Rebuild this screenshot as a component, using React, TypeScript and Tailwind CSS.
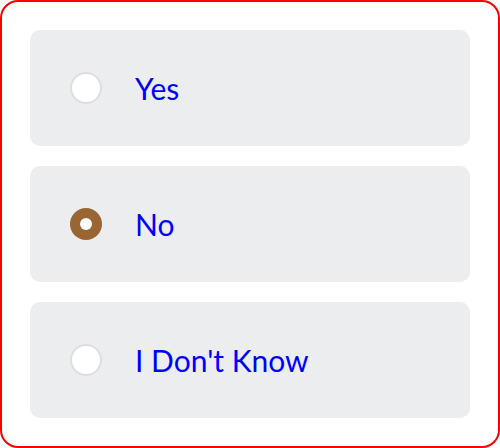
import React, { useState } from "react";

const options = ["Yes", "No", "I Don't Know"];

export default function App() {
  const [sel, setSel] = useState("No");
  return (
    <div className="w-[500px] h-[448px] bg-white">
      <div className="w-[500px] h-[448px] border-2 border-[#ff0000] rounded-[18px] px-[28px] py-[28px] flex flex-col gap-[20px]">
        {options.map((o) => {
          const active = sel === o;
          return (
            <button
              key={o}
              onClick={() => setSel(o)}
              className="h-[116px] w-full rounded-[10px] bg-[#ecedef] flex items-center pl-[40px] gap-[33px] text-left"
            >
              {active ? (
                <span className="w-[32px] h-[32px] rounded-full bg-[#996633] flex items-center justify-center shrink-0">
                  <span className="w-[12px] h-[12px] rounded-full bg-white" />
                </span>
              ) : (
                <span className="w-[32px] h-[32px] rounded-full bg-white border-2 border-[#dcdee2] shrink-0" />
              )}
              <span
                className="text-[30px] text-[#0000ff] leading-none"
                style={{ fontFamily: "Lato, sans-serif" }}
              >
                {o}
              </span>
            </button>
          );
        })}
      </div>
    </div>
  );
}
